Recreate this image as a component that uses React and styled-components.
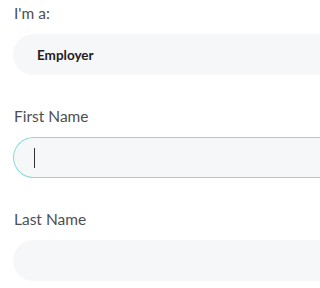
import React from "react";
import styled, { createGlobalStyle } from "styled-components";

const Global = createGlobalStyle`
  html, body { margin: 0; padding: 0; background: #ffffff; overflow: hidden; }
  body { font-family: Lato, "Noto Sans", sans-serif; }
`;

const Form = styled.div`
  display: flex;
  flex-direction: column;
  gap: 31px;
  padding: 3px 0 0 13px;
`;

const Group = styled.div`
  display: flex;
  flex-direction: column;
  gap: 11px;
`;

const Label = styled.div`
  font-size: 15.5px;
  line-height: 20px;
  color: #4d4f53;
  padding-left: 1px;
`;

const Field = styled.div`
  box-sizing: border-box;
  height: 41px;
  border-radius: 21px 0 0 21px;
  background: #f6f7f9;
  border: 1.5px solid ${(p) => (p.$focused ? "#8cd8d9" : "transparent")};
  border-right: none;
  display: flex;
  align-items: center;
  padding-left: ${(p) => p.$pad}px;
`;

const Value = styled.span`
  font-size: 13.5px;
  font-weight: 700;
  color: #1f2023;
`;

const Caret = styled.span`
  display: block;
  width: 1px;
  height: 20px;
  background: #333;
`;

export default function App() {
  return (
    <>
      <Global />
      <Form>
        <Group>
          <Label>I'm a:</Label>
          <Field $pad={23}>
            <Value>Employer</Value>
          </Field>
        </Group>
        <Group>
          <Label>First Name</Label>
          <Field $focused $pad={19.5}>
            <Caret />
          </Field>
        </Group>
        <Group>
          <Label>Last Name</Label>
          <Field $pad={23} />
        </Group>
      </Form>
    </>
  );
}
